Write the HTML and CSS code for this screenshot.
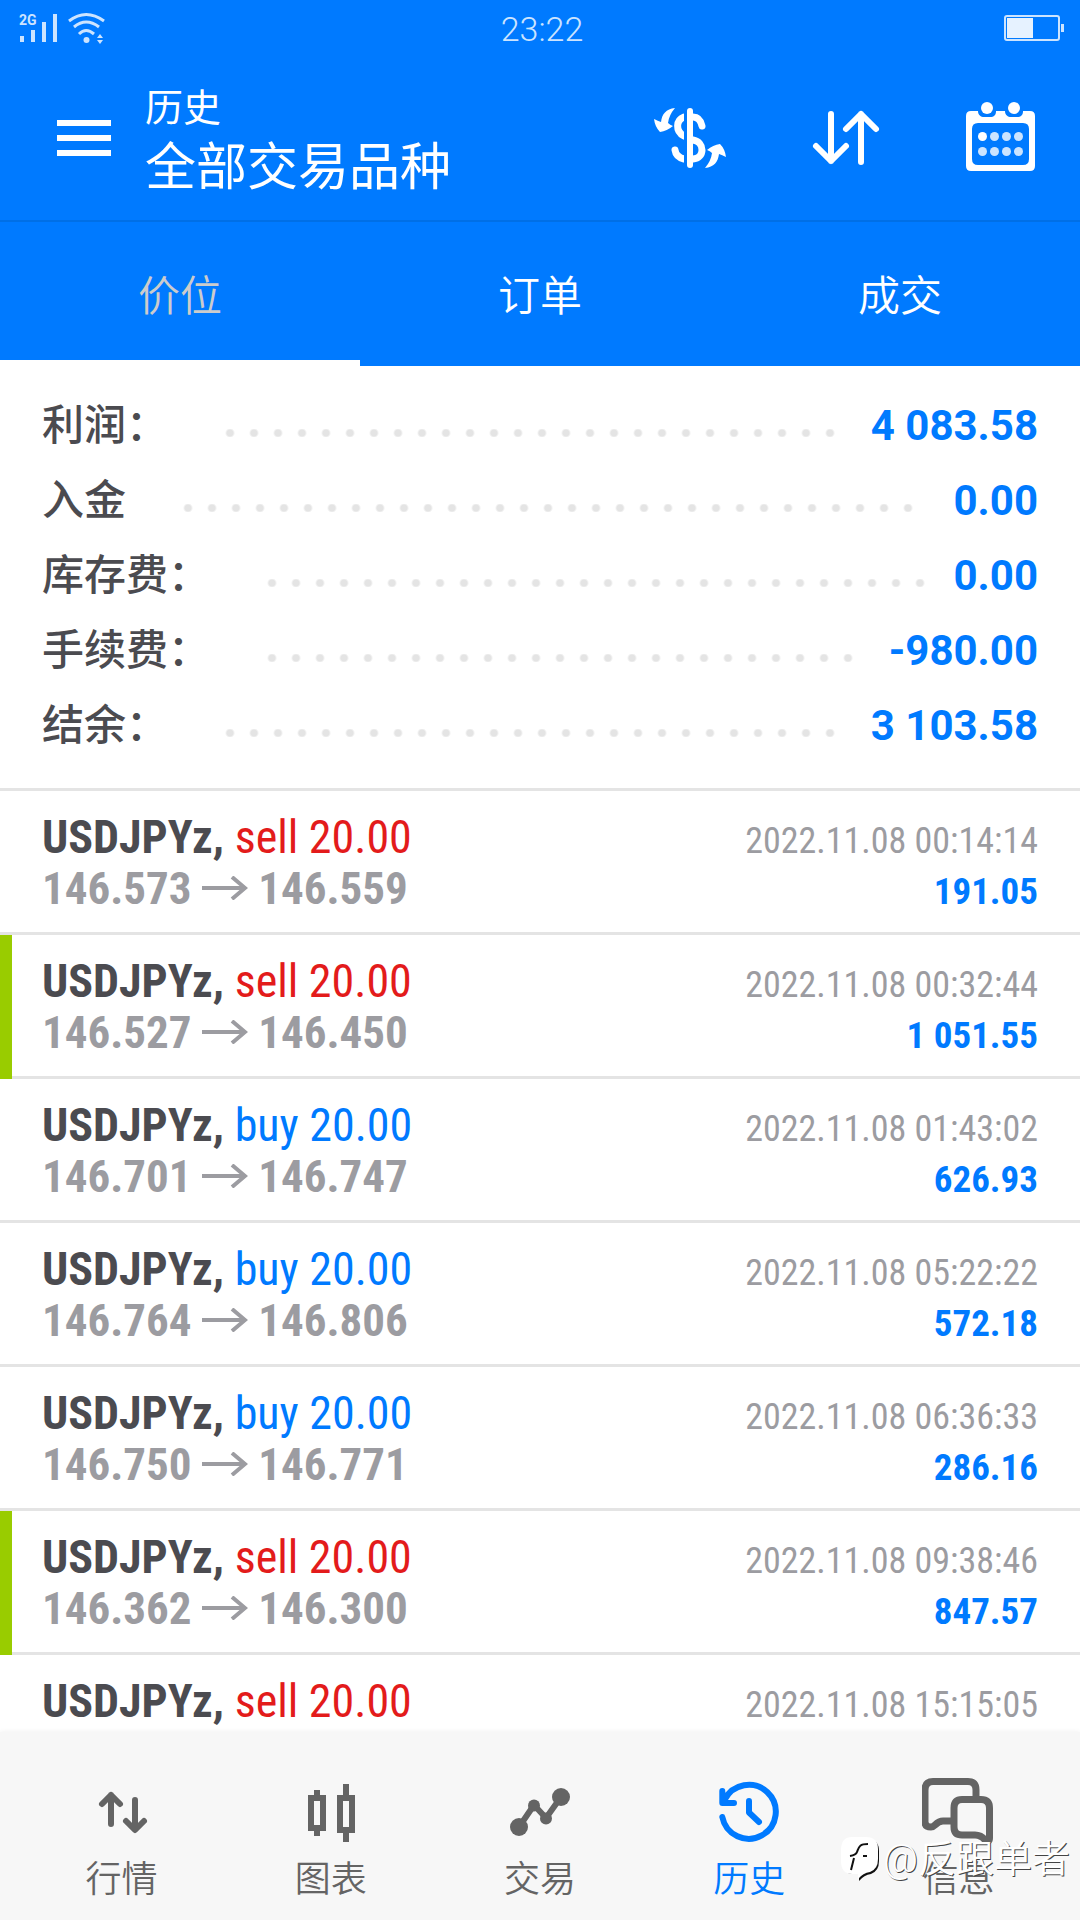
FILE: index.html
```html
<!DOCTYPE html>
<html lang="zh-CN">
<head>
<meta charset="utf-8">
<meta name="viewport" content="width=device-width">
<title>历史</title>
<link rel="stylesheet" href="styles.css">
</head>
<body>
<header class="top">
  <div class="status">
    <div class="status-left">
      <svg class="signal" viewBox="0 0 90 36" aria-hidden="true">
        <text class="net" x="0" y="14">2G</text>
        <path d="M1 25h4v6h-4zM12 19h4v12h-4zM23 11h4v20h-4zM34 3h4v28h-4z"/>
        <g class="waves"><path d="M50 10Q67 -3 85 10"/><path d="M55 16Q67 6 80 16"/><path d="M60 23Q67 16 75 23"/></g>
        <circle cx="67.500" cy="29" r="3"/>
        <path d="M78 27l3-4 3 4zM78 29h6l-3 4z"/>
      </svg>
    </div>
    <time class="clock">23:22</time>
    <div class="status-right">
      <svg class="battery" viewBox="0 0 62 28" aria-hidden="true">
        <rect class="case" x="2" y="1" width="54" height="24" rx="2"/>
        <rect class="charge" x="4" y="3" width="26" height="20"/>
        <rect x="58" y="9" width="3" height="8"/>
      </svg>
    </div>
  </div>
  <div class="appbar">
    <button class="icon-btn menu" aria-label="菜单"><svg viewBox="0 0 54 36"><path d="M0 0h54v6H0zM0 15h54v6H0zM0 30h54v6H0z"/></svg></button>
    <div class="titles">
      <h1>历史</h1>
      <p>全部交易品种</p>
    </div>
    <div class="actions">
      <button class="icon-btn" aria-label="货币"><svg viewBox="0 0 72 72">
        <path d="M21 6C12 7 8 12 7 20Q4 19 0 17Q1 25 6 30Q13 29 19 24Q16 23 14 21Q15 13 21 6Z"/>
        <path d="M51 66C60 65 64 60 65 52Q68 53 72 55Q71 47 66 42Q59 43 53 48Q56 49 58 51Q57 59 51 66Z"/>
        <path class="line swirl" d="M30 15C22 18 21 29 30 34M39 15Q46 15 48 24M21 48Q22 55 30 57M39 38C51 40 51 56 39 57"/>
        <path class="pole" d="M33 9V63"/>
        <path class="line" d="M36 9V63"/>
      </svg></button>
      <button class="icon-btn" aria-label="排序"><svg viewBox="0 0 72 72"><path class="line" d="M21 12V59M6 44L21 59L36 44M51 60V12M36 27L51 12L66 27"/></svg></button>
      <button class="icon-btn" aria-label="日历"><svg viewBox="1 1 72 72">
        <path fill-rule="evenodd" d="M8 10H13C13 14 16 16 19 16H25C29 16 31 14 31 10H40C40 14 43 16 46 16H52C56 16 58 14 58 10H65Q70 10 70 15V65Q70 70 65 70H6Q1 70 1 65V15Q1 10 6 10ZM13 22Q7 22 7 28V58Q7 64 13 64H58Q64 64 64 58V28Q64 22 58 22Z"/>
        <circle cx="22" cy="7" r="6"/><circle cx="49" cy="7" r="6"/>
        <circle cx="17.500" cy="35.500" r="4.500"/>
        <g opacity=".8"><circle cx="29.500" cy="35.500" r="4.500"/><circle cx="41.500" cy="35.500" r="4.500"/><circle cx="53.500" cy="35.500" r="4.500"/><circle cx="17.500" cy="50.500" r="4.500"/><circle cx="29.500" cy="50.500" r="4.500"/><circle cx="41.500" cy="50.500" r="4.500"/><circle cx="53.500" cy="50.500" r="4.500"/></g>
      </svg></button>
    </div>
  </div>
  <div class="tabs" role="tablist">
    <button class="tab current" role="tab" aria-selected="true">价位</button>
    <button class="tab" role="tab" aria-selected="false">订单</button>
    <button class="tab" role="tab" aria-selected="false">成交</button>
  </div>
</header>

<main class="content">
  <dl class="summary">
    <div class="sum-row"><dt>利润：<span class="leader"></span></dt><dd>4 083.58</dd></div>
    <div class="sum-row"><dt>入金<span class="leader"></span></dt><dd>0.00</dd></div>
    <div class="sum-row"><dt>库存费：<span class="leader"></span></dt><dd>0.00</dd></div>
    <div class="sum-row"><dt>手续费：<span class="leader"></span></dt><dd>-980.00</dd></div>
    <div class="sum-row"><dt>结余：<span class="leader"></span></dt><dd>3 103.58</dd></div>
  </dl>
  <svg class="defs" aria-hidden="true"><symbol id="arrow" viewBox="0 0 46 24"><path d="M0 12H43M30 1L43 12L30 23"/></symbol></svg>
  <ul class="deals">
    <li class="deal">
      <div class="line-row"><span class="what"><b>USDJPYz,</b> <span class="sell">sell 20.00</span></span><time class="when">2022.11.08 00:14:14</time></div>
      <div class="line-row"><span class="prices">146.573 <svg class="arrow"><use href="#arrow"/></svg> 146.559</span><span class="profit">191.05</span></div>
    </li>
    <li class="deal marked">
      <div class="line-row"><span class="what"><b>USDJPYz,</b> <span class="sell">sell 20.00</span></span><time class="when">2022.11.08 00:32:44</time></div>
      <div class="line-row"><span class="prices">146.527 <svg class="arrow"><use href="#arrow"/></svg> 146.450</span><span class="profit">1 051.55</span></div>
    </li>
    <li class="deal">
      <div class="line-row"><span class="what"><b>USDJPYz,</b> <span class="buy">buy 20.00</span></span><time class="when">2022.11.08 01:43:02</time></div>
      <div class="line-row"><span class="prices">146.701 <svg class="arrow"><use href="#arrow"/></svg> 146.747</span><span class="profit">626.93</span></div>
    </li>
    <li class="deal">
      <div class="line-row"><span class="what"><b>USDJPYz,</b> <span class="buy">buy 20.00</span></span><time class="when">2022.11.08 05:22:22</time></div>
      <div class="line-row"><span class="prices">146.764 <svg class="arrow"><use href="#arrow"/></svg> 146.806</span><span class="profit">572.18</span></div>
    </li>
    <li class="deal">
      <div class="line-row"><span class="what"><b>USDJPYz,</b> <span class="buy">buy 20.00</span></span><time class="when">2022.11.08 06:36:33</time></div>
      <div class="line-row"><span class="prices">146.750 <svg class="arrow"><use href="#arrow"/></svg> 146.771</span><span class="profit">286.16</span></div>
    </li>
    <li class="deal marked">
      <div class="line-row"><span class="what"><b>USDJPYz,</b> <span class="sell">sell 20.00</span></span><time class="when">2022.11.08 09:38:46</time></div>
      <div class="line-row"><span class="prices">146.362 <svg class="arrow"><use href="#arrow"/></svg> 146.300</span><span class="profit">847.57</span></div>
    </li>
    <li class="deal">
      <div class="line-row"><span class="what"><b>USDJPYz,</b> <span class="sell">sell 20.00</span></span><time class="when">2022.11.08 15:15:05</time></div>
    </li>
  </ul>
</main>

<nav class="bottom">
  <a class="nav-item" href="#quotes"><svg viewBox="0 0 72 72"><path class="line" d="M25 48V19M16 28L25 19L34 28M49 24V53M40 45L49 54L58 45"/></svg>行情</a>
  <a class="nav-item" href="#chart"><svg viewBox="0 0 72 72"><path fill-rule="evenodd" d="M19 14H25V19H31V55H25V60H19V55H13V19H19ZM19 25V49H25V25ZM48 8H54V19H60V57H54V66H48V57H42V19H48ZM48 25V51H54V25Z"/></svg>图表</a>
  <a class="nav-item" href="#trade"><svg viewBox="0 0 72 72"><path class="line" d="M15 51L30 29L42 42L57 21"/><circle cx="15" cy="51" r="9"/><circle cx="30" cy="29.500" r="6"/><circle cx="42" cy="42.500" r="6"/><circle cx="57" cy="21" r="9"/></svg>交易</a>
  <a class="nav-item active" href="#history"><svg viewBox="0 0 72 72"><path class="line" d="M9.300 41A27 27 0 1 0 11.500 24M9.300 15V27H21M36 25V36.500L46 46"/><path d="M7 17L18 29H7Z"/></svg>历史</a>
  <a class="nav-item" href="#messages"><svg viewBox="0 0 72 72"><path class="line wide" d="M54 20V14Q54 5.500 46 5.500H11Q3 5.500 3 14V46Q3 51 9 51Q11 51 13 49Q17 45 21 45H30M40 23.500H59Q67.500 23.500 67.500 32V62Q67.500 67 63 64Q59 59 53 59H40Q32 59 32 51V32Q32 23.500 40 23.500Z"/></svg>信息</a>
  <div class="credit">
    <svg viewBox="0 0 38 44" aria-hidden="true"><path class="shade" d="M12 2H26Q38 2 38 14V24Q38 34 30 37Q23 38 18 44V37H12Q2 37 2 24V14Q2 2 12 2Z"/><path class="face" d="M11 0H25Q37 0 37 12V22Q37 32 29 35Q22 36 17 42V37H11Q0 37 0 24V13Q0 0 11 0Z"/><path class="mark" d="M27 7C18 7 18 10 16 15Q15 18 9 19M22 19H26M13 21L10 33"/></svg>
    <span>@反跟单者</span>
  </div>
</nav>
</body>
</html>
```
FILE: styles.css
```css
* { box-sizing: border-box; }

html, body { height: 100%; }

body {
  margin: 0;
  display: flex;
  flex-direction: column;
  background: #fff;
  color: #4b4b50;
  font-family: Roboto, "Noto Sans CJK SC", sans-serif;
}

button {
  margin: 0;
  padding: 0;
  border: 0;
  background: none;
  color: inherit;
  font: inherit;
}

h1, p, dl, dd, ul { margin: 0; padding: 0; font-weight: inherit; }

svg { display: block; fill: currentColor; }
.line {
  fill: none;
  stroke: currentColor;
  stroke-width: 6px;
  stroke-linecap: round;
  stroke-linejoin: round;
}
.pole { fill: none; stroke: #007aff; stroke-width: 6px; }
.swirl { stroke-width: 7px; }

/* header */
.top { flex: none; background: #007aff; color: #fff; }

.status {
  display: grid;
  grid-template-columns: 1fr auto 1fr;
  align-items: center;
  height: 58px;
  padding: 0 15px 0 19px;
  color: #cce4ff;
}
.signal { width: 90px; height: 36px; }
.net { font: 700 14px Roboto, sans-serif; }
.waves { fill: none; stroke: currentColor; stroke-width: 3px; }
.clock { font-size: 34px; font-weight: 300; }
.status-right { display: flex; justify-content: flex-end; }
.battery { width: 62px; height: 28px; }
.case { fill: none; stroke: currentColor; stroke-width: 2px; }
.charge { fill: #e6f2ff; }

.appbar {
  display: flex;
  align-items: center;
  height: 162px;
  padding: 0 42px 2px 57px;
}
.menu svg { width: 54px; height: 36px; }
.titles { flex: 1; margin-left: 34px; font-weight: 400; }
.titles h1 { font-size: 38px; line-height: 60px; }
.titles p { font-size: 51px; line-height: 60px; }
.actions { display: flex; gap: 84px; }
.actions svg { width: 72px; height: 72px; }

.tabs {
  display: grid;
  grid-template-columns: repeat(3, 1fr);
  border-top: 2px solid #006fe6;
}
.tab {
  height: 144px;
  padding-top: 2px;
  border-bottom: 6px solid transparent;
  font-size: 42px;
  font-weight: 350;
}
.tab.current { color: #ccc; border-bottom-color: #fff; }

/* totals */
.content { flex: 1; min-height: 0; overflow: hidden; }

.summary { padding: 22px 42px 25px; border-bottom: 3px solid #e4e4e4; }
.sum-row { display: flex; font-size: 42px; line-height: 75px; }
.sum-row dt {
  flex: 1;
  display: flex;
  align-items: center;
  font-weight: 500;
  white-space: nowrap;
}
.sum-row dd { color: #007aff; font-weight: 700; }
.leader { flex: 1; height: 8px; margin: 15px 15px 0 50px; }
/* only whole dots: the width is cut down to a multiple of the dot pitch */
.leader::before {
  content: "";
  display: block;
  width: 100%;
  width: round(down, 100%, 24px);
  height: 8px;
  background: radial-gradient(circle at 12px 4px, #e4e4e4 0 3px, #e4e4e400 5px) 0 0 / 24px 8px repeat-x;
}

/* deals */
.defs { width: 0; height: 0; position: absolute; }
.deals {
  list-style: none;
  font-family: "Roboto Condensed", "Liberation Sans Narrow", Roboto, sans-serif;
}
.deal {
  height: 144px;
  padding: 21px 42px 0;
  box-shadow: inset 0 -3px #e4e4e4;
}
.deal.marked { box-shadow: inset 12px 0 #9c0, inset 0 -3px #e4e4e4; }
.line-row {
  display: flex;
  justify-content: space-between;
  align-items: baseline;
  height: 51px;
  line-height: 51px;
}
.what { font-size: 46px; }
.prices { color: #9c9ca1; font-size: 45px; font-weight: 700; }
.when { color: #9c9ca1; font-size: 36px; }
.profit { color: #007aff; font-size: 37px; font-weight: 700; }
.sell { color: #e31b1b; }
.buy { color: #007aff; }
.arrow {
  display: inline-block;
  width: 46px;
  height: 24px;
  vertical-align: 4px;
  fill: none;
  stroke: currentColor;
  stroke-width: 4px;
}

/* bottom navigation */
.bottom {
  position: relative;
  flex: none;
  display: grid;
  grid-template-columns: repeat(5, 1fr);
  height: 188px;
  padding: 44px 17px 0;
  background: #f7f7f7;
  box-shadow: 0 0 5px #eee;
}
.nav-item {
  display: flex;
  flex-direction: column;
  align-items: center;
  gap: 4px;
  color: #646464;
  font-size: 36px;
  font-weight: 350;
  line-height: 56px;
  text-decoration: none;
}
.nav-item svg { width: 72px; height: 72px; }
.nav-item .wide { stroke-width: 7px; }
.nav-item.active { color: #007aff; }

.credit {
  position: absolute;
  right: 10px;
  bottom: 37px;
  display: flex;
  align-items: center;
  gap: 4px;
  color: #fff;
  font-size: 38px;
  font-weight: 350;
  line-height: 48px;
  text-shadow: 1px 1px 0 #444;
}
.credit svg { width: 38px; height: 44px; }
.credit .shade { fill: #111; }
.credit .face { fill: #fff; }
.credit .mark { fill: none; stroke: #111; stroke-width: 2px; }
```
